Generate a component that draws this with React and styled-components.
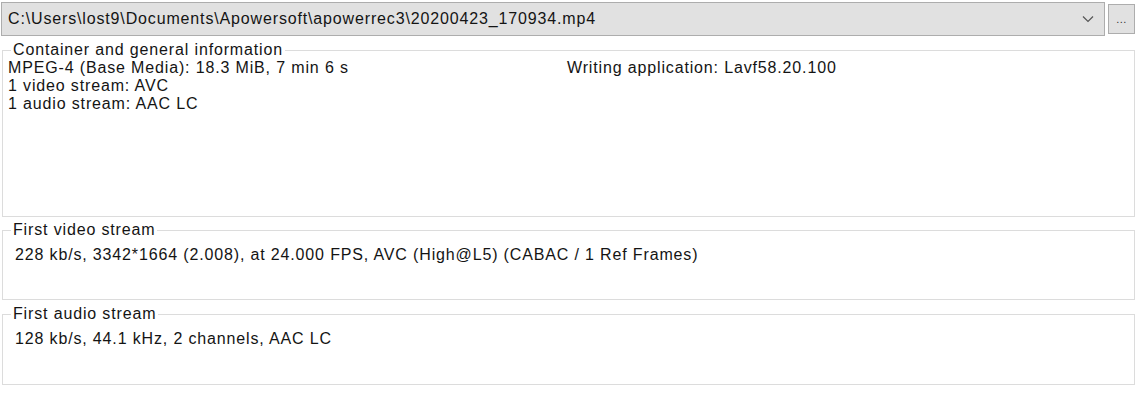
import React from "react";
import styled, { createGlobalStyle } from "styled-components";

const GlobalStyle = createGlobalStyle`
  html, body {
    margin: 0;
    padding: 0;
    background: #ffffff;
  }
  body {
    font-family: "Liberation Sans", Arial, sans-serif;
    font-size: 16px;
    letter-spacing: 0.85px;
    color: #141414;
  }
`;

const Page = styled.div`
  width: 1139px;
  height: 405px;
  padding: 2px 4px 0 1px;
  box-sizing: border-box;
  display: flex;
  flex-direction: column;
`;

const FileRow = styled.div`
  display: flex;
  align-items: center;
  gap: 3px;
  height: 34px;
`;

const Combo = styled.div`
  flex: 1;
  height: 34px;
  box-sizing: border-box;
  border: 1px solid #adadad;
  background: #e1e1e1;
  display: flex;
  align-items: center;
  padding: 0 10px 0 6px;
`;

const ComboText = styled.span`
  flex: 1;
  white-space: nowrap;
  overflow: hidden;
`;

const Chevron = styled.svg`
  width: 12px;
  height: 8px;
  flex: none;
`;

const BrowseButton = styled.div`
  width: 27px;
  height: 30px;
  box-sizing: border-box;
  border: 1px solid #adadad;
  background: #e1e1e1;
  display: flex;
  align-items: flex-end;
  justify-content: center;
  padding-bottom: 8px;
  font-size: 11px;
  line-height: 1;
  color: #333;
  letter-spacing: 0.5px;
`;

const Groups = styled.div`
  display: flex;
  flex-direction: column;
  padding-left: 1px;
`;

const Group = styled.div`
  position: relative;
  border: 1px solid #dcdcdc;
  height: ${(p) => p.$height}px;
  margin-top: ${(p) => p.$gap}px;
  box-sizing: border-box;
  padding: ${(p) => p.$pad};
`;

const Legend = styled.span`
  position: absolute;
  top: -10px;
  left: 8px;
  padding: 0 2px;
  background: #ffffff;
  line-height: 18px;
  white-space: nowrap;
`;

const InfoGrid = styled.div`
  display: grid;
  grid-template-columns: 559px 1fr;
  line-height: 18px;
`;

const Line = styled.div`
  white-space: nowrap;
  line-height: 18px;
`;

const App = () => (
  <>
    <GlobalStyle />
    <Page>
      <FileRow>
        <Combo>
          <ComboText>
            C:\Users\lost9\Documents\Apowersoft\apowerrec3\20200423_170934.mp4
          </ComboText>
          <Chevron viewBox="0 0 12 8">
            <path d="M1 1.5 L6 6.5 L11 1.5" fill="none" stroke="#555" strokeWidth="1.2" />
          </Chevron>
        </Combo>
        <BrowseButton>...</BrowseButton>
      </FileRow>
      <Groups>
        <Group $height={167} $gap={14} $pad="8px 0 0 5px">
          <Legend>Container and general information</Legend>
          <InfoGrid>
            <Line>MPEG-4 (Base Media): 18.3 MiB, 7 min 6 s</Line>
            <Line>Writing application: Lavf58.20.100</Line>
            <Line>1 video stream: AVC</Line>
            <Line />
            <Line>1 audio stream: AAC LC</Line>
          </InfoGrid>
        </Group>
        <Group $height={70} $gap={13} $pad="15px 0 0 12px">
          <Legend>First video stream</Legend>
          <Line>228 kb/s, 3342*1664 (2.008), at 24.000 FPS, AVC (High@L5) (CABAC / 1 Ref Frames)</Line>
        </Group>
        <Group $height={71} $gap={14} $pad="15px 0 0 12px">
          <Legend>First audio stream</Legend>
          <Line>128 kb/s, 44.1 kHz, 2 channels, AAC LC</Line>
        </Group>
      </Groups>
    </Page>
  </>
);

export default App;
